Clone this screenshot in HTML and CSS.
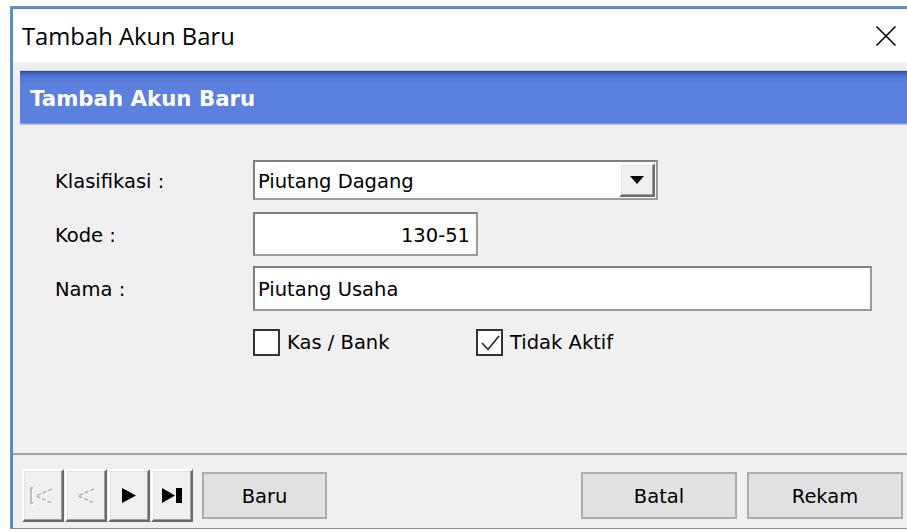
FILE: index.html
```html
<!DOCTYPE html>
<html lang="id">
<head>
<meta charset="utf-8">
<title>Tambah Akun Baru</title>
<link rel="stylesheet" href="styles.css">
</head>
<body>
<div class="window">
  <div class="frame">
    <div class="titlebar">
      <span class="title">Tambah Akun Baru</span>
      <svg class="close" width="22" height="22" viewBox="0 0 22 22">
        <path d="M1.5 1.5 L20.5 20.5 M20.5 1.5 L1.5 20.5" stroke="#000" stroke-width="1.6" fill="none"/>
      </svg>
    </div>
    <div class="client">
      <div class="banner">Tambah Akun Baru</div>

      <div class="form">
        <div class="row row-combo">
          <span class="label">Klasifikasi :</span>
          <div class="combo">
            <span class="combo-text">Piutang Dagang</span>
            <span class="drop">
              <svg width="14" height="8" viewBox="0 0 14 8"><path d="M0 0 H14 L7 8 Z" fill="#000"/></svg>
            </span>
          </div>
        </div>
        <div class="row row-kode">
          <span class="label">Kode :</span>
          <div class="field field-kode">130-51</div>
        </div>
        <div class="row row-nama">
          <span class="label">Nama :</span>
          <div class="field field-nama">Piutang Usaha</div>
        </div>
        <div class="checks">
          <label class="check check-kas"><span class="box"></span>Kas / Bank</label>
          <label class="check check-aktif">
            <span class="box">
              <svg width="22" height="22" viewBox="0 0 22 22"><path d="M3 11 L9 17.5 L20 4" stroke="#333" stroke-width="1.8" fill="none"/></svg>
            </span>Tidak Aktif</label>
        </div>
      </div>

      <div class="footer">
        <div class="nav">
          <span class="navbtn">
            <svg width="26" height="20" viewBox="0 0 26 20">
              <g stroke="#fff" stroke-width="1.4" fill="none" transform="translate(1 1)">
                <path d="M3 2 H1 V17 H3"/><path d="M22 3 L6 10 L22 17" stroke-dasharray="4 2"/>
              </g>
              <g stroke="#a8a8a8" stroke-width="1.4" fill="none">
                <path d="M3 2 H1 V17 H3"/><path d="M22 3 L6 10 L22 17" stroke-dasharray="4 2"/>
              </g>
            </svg>
          </span>
          <span class="navbtn">
            <svg width="22" height="20" viewBox="0 0 22 20">
              <g stroke="#fff" stroke-width="1.4" fill="none" transform="translate(1 1)">
                <path d="M19 3 L3 10 L19 17" stroke-dasharray="4 2"/>
              </g>
              <g stroke="#a8a8a8" stroke-width="1.4" fill="none">
                <path d="M19 3 L3 10 L19 17" stroke-dasharray="4 2"/>
              </g>
            </svg>
          </span>
          <span class="navbtn">
            <svg width="14" height="15" viewBox="0 0 14 15"><path d="M0 0 L14 7.5 L0 15 Z" fill="#000"/></svg>
          </span>
          <span class="navbtn">
            <svg width="21" height="15" viewBox="0 0 21 15"><path d="M0 0 L13 7.5 L0 15 Z" fill="#000"/><rect x="14" y="0" width="6" height="15" fill="#000"/></svg>
          </span>
        </div>
        <button class="btn btn-baru" type="button">Baru</button>
        <div class="spacer"></div>
        <button class="btn" type="button">Batal</button>
        <button class="btn" type="button">Rekam</button>
      </div>
    </div>
  </div>
</div>
</body>
</html>
```

FILE: styles.css
```css
html, body {
  margin: 0;
  padding: 0;
  background: #fff;
  overflow: hidden;
}

body {
  width: 907px;
  height: 531px;
}

/* dialog window, clipped at the right edge of the viewport */
.window {
  box-sizing: border-box;
  margin: 6px 0 0 10px;
  height: 523px;
  border-top: 1px solid #8c8c8c;
  border-left: 1px solid #8c8c8c;
  border-bottom: 1px solid #8c8c8c;
  background: #fff;
}

.frame {
  box-sizing: border-box;
  height: 100%;
  border-top: 2px solid #3e92e0;
  border-left: 2px solid #3e92e0;
  display: flex;
  flex-direction: column;
}

.titlebar {
  height: 53px;
  flex: none;
  display: flex;
  align-items: center;
  padding: 0 0 0 9px;
  background: #fff;
}

.title {
  font-family: "Open Sans", "Noto Sans", sans-serif;
  font-size: 23.8px;
  color: #000;
  flex: 1;
}

.close {
  margin-right: 10px;
}

.client {
  flex: 1;
  display: flex;
  flex-direction: column;
  background: #f0f0f0;
  padding-top: 8px;
  font-family: "DejaVu Sans", "Liberation Sans", sans-serif;
  font-size: 19.5px;
  color: #000;
}

.banner {
  margin-left: 7px;
  height: 55px;
  box-sizing: border-box;
  display: flex;
  align-items: center;
  padding-left: 10px;
  color: #fff;
  font-weight: bold;
  font-size: 21.3px;
  background: linear-gradient(to bottom, #2c4690 0px, #4666c2 3px, #5679d6 7px, #5b80de 14px, #5b80de 52px, #a9b8e8 53px, #dfe4f2 55px);
  border-top: 1px solid #d5d5d5;
}

.form {
  margin-top: 35px;
  padding-left: 42px;
  display: flex;
  flex-direction: column;
}

.row {
  display: flex;
  align-items: center;
}

.label {
  width: 198px;
  flex: none;
  padding-top: 2px;
}

.row-kode { margin-top: 12px; }
.row-nama { margin-top: 10px; }

.combo {
  box-sizing: border-box;
  width: 405px;
  height: 40px;
  background: #fff;
  border: 2px solid;
  border-color: #7f7f7f #9a9a9a #9a9a9a #7f7f7f;
  display: flex;
  align-items: center;
  padding: 0 1px 0 3px;
}

.combo-text {
  flex: 1;
  padding-top: 2px;
}

.drop {
  box-sizing: border-box;
  width: 36px;
  height: 34px;
  display: flex;
  align-items: center;
  justify-content: center;
  background: #f0f0f0;
  border: 2px solid;
  border-color: #fff #6a6a6a #6a6a6a #fff;
  box-shadow: inset -1px -1px 0 #a0a0a0, inset 1px 1px 0 #e3e3e3;
}

.field {
  box-sizing: border-box;
  height: 44px;
  background: #fff;
  border: 2px solid;
  border-color: #808080 #9a9a9a #9a9a9a #808080;
  display: flex;
  align-items: center;
  padding: 2px 6px 0 3px;
}

.field-kode {
  width: 225px;
  justify-content: flex-end;
}

.field-nama {
  width: 619px;
  height: 45px;
}

.checks {
  display: flex;
  margin-top: 18px;
  margin-left: 198px;
}

.check {
  display: flex;
  align-items: center;
  gap: 7px;
}

.check-kas { width: 223px; }

.box {
  box-sizing: border-box;
  width: 27px;
  height: 27px;
  background: #fff;
  border: 2px solid #333;
  display: flex;
  align-items: center;
  justify-content: center;
}

.footer {
  margin-top: auto;
  height: 75px;
  box-sizing: border-box;
  border-top: 2px solid #a5a5a5;
  padding: 14px 4px 6px 9px;
  display: flex;
  align-items: center;
}

.nav {
  display: flex;
  gap: 1px;
}

.navbtn {
  box-sizing: border-box;
  width: 42px;
  height: 53px;
  display: flex;
  align-items: center;
  justify-content: center;
  background: #f0f0f0;
  border: 2px solid;
  border-color: #fff #696969 #696969 #fff;
  box-shadow: inset -1px -1px 0 #a0a0a0, inset 1px 1px 0 #e3e3e3;
}

.btn {
  box-sizing: border-box;
  width: 156px;
  height: 47px;
  margin: 0 0 0 10px;
  padding: 2px 0 0;
  background: #e1e1e1;
  border: 2px solid #adadad;
  font: inherit;
  color: #000;
}

.btn-baru {
  width: 125px;
  margin-left: 9px;
}

.spacer { flex: 1; }
```
